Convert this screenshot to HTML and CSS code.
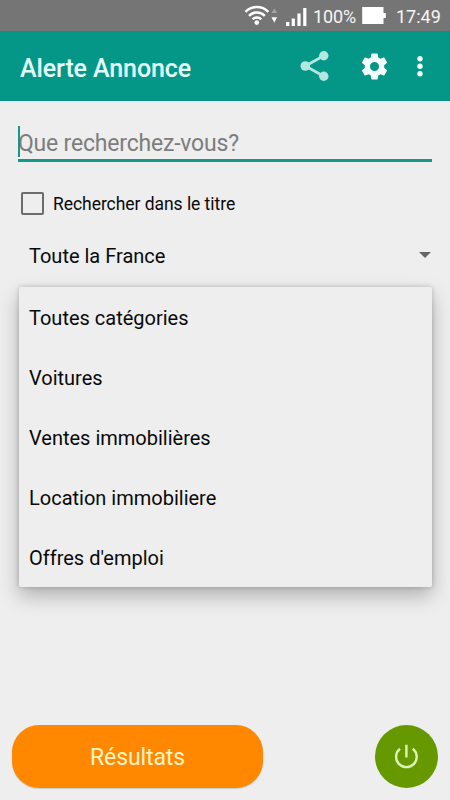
FILE: index.html
```html
<!DOCTYPE html>
<html lang="fr">
<head>
<meta charset="utf-8">
<title>Alerte Annonce</title>
<link rel="stylesheet" href="styles.css">
</head>
<body>
<div class="status">
  <svg class="signals" width="66" height="31" viewBox="244 0 66 31" fill="none" stroke="#fff">
    <path d="M245.500 11.800a16 16 0 0 1 22.800 0M249 15.800a11 11 0 0 1 15.800 0M252.600 19.300a6 6 0 0 1 8.600 0" stroke-width="2.400"/>
    <circle cx="256.800" cy="22.600" r="2.300" fill="#fff" stroke="none"/>
    <path d="M271.500 13l2.800-4.500 2.800 4.500z" fill="#a5a5a5" stroke="none"/>
    <path d="M271.500 17.200l2.800 5.600 2.800-5.600z" fill="#fff" stroke="none"/>
    <path d="M287.700 22v4M293.300 18.500V26M299 13.500V26M304.800 8V26" stroke-width="3.200"/>
  </svg>
  <span class="percent">100%</span>
  <svg class="battery" width="25" height="31" viewBox="362 0 25 31" fill="#fff"><path d="M362.200 7h21.300v6h2.300v5h-2.300v6h-21.300z"/></svg>
  <span class="clock">17:49</span>
</div>
<header class="appbar">
  <h1>Alerte Annonce</h1>
  <svg class="share" width="30" height="32" viewBox="0 0 30 32" fill="#b4e7df" stroke="#b4e7df">
    <path d="M23.800 5.800L5.300 16l18.500 10.200" fill="none" stroke-width="2.700"/>
    <circle cx="23.800" cy="5.800" r="4.700" stroke="none"/><circle cx="5.300" cy="16" r="4.800" stroke="none"/><circle cx="23.800" cy="26.200" r="4.700" stroke="none"/>
  </svg>
  <svg class="gear" width="31" height="31" viewBox="0 0 24 24" fill="#f7fffe"><path d="M19.430 12.980c.04-.32.07-.64.07-.98s-.03-.66-.07-.98l2.110-1.650c.19-.15.24-.42.12-.64l-2-3.460c-.12-.22-.39-.3-.61-.22l-2.490 1c-.52-.4-1.080-.73-1.690-.98l-.38-2.650C14.460 2.180 14.250 2 14 2h-4c-.25 0-.46.18-.49.42l-.38 2.650c-.61.25-1.170.59-1.690.98l-2.490-1c-.23-.09-.49 0-.61.22l-2 3.460c-.13.22-.07.49.12.64l2.110 1.650c-.04.32-.07.65-.07.98s.03.66.07.98l-2.110 1.650c-.19.15-.24.42-.12.64l2 3.460c.12.22.39.3.61.22l2.490-1c.52.4 1.080.73 1.690.98l.38 2.650c.03.24.24.42.49.42h4c.25 0 .46-.18.49-.42l.38-2.650c.61-.25 1.170-.59 1.690-.98l2.490 1c.23.09.49 0 .61-.22l2-3.460c.12-.22.07-.49-.12-.64l-2.110-1.650zM12 15.500c-1.930 0-3.500-1.570-3.500-3.500s1.570-3.500 3.500-3.500 3.500 1.570 3.500 3.500-1.570 3.500-3.500 3.500z"/></svg>
  <svg class="more" width="8" height="24" viewBox="0 0 8 24" fill="#f0fffd"><circle cx="4" cy="4.700" r="2.700"/><circle cx="4" cy="12.200" r="2.700"/><circle cx="4" cy="19.700" r="2.700"/></svg>
</header>
<main class="form">
  <div class="search"><span class="caret"></span><span class="hint">Que recherchez-vous?</span></div>
  <div class="check"><span class="box"></span><span class="check-label">Rechercher dans le titre</span></div>
  <div class="region"><span class="region-label">Toute la France</span><span class="arrow"></span></div>
  <ul class="menu">
    <li>Toutes catégories</li>
    <li>Voitures</li>
    <li>Ventes immobilières</li>
    <li>Location immobiliere</li>
    <li>Offres d'emploi</li>
  </ul>
</main>
<footer class="actions">
  <div class="results"><span>Résultats</span></div>
  <div class="power">
    <svg width="63" height="63" viewBox="0 0 63 63" fill="none" stroke="#dcf5b4" stroke-width="2.400"><path d="M25 23.800a10.300 10.300 0 1 0 12.800 0M31.400 19.800v12.600"/></svg>
  </div>
</footer>
</body>
</html>
```

FILE: styles.css
```css
* { box-sizing: border-box; }
body {
  margin: 0;
  width: 450px;
  height: 800px;
  overflow: hidden;
  display: flex;
  flex-direction: column;
  background: #eee;
  color: #090909;
  font-family: Roboto, "Liberation Sans", sans-serif;
  font-size: 20px;
  white-space: nowrap;
}
svg { display: block; flex: none; }
.status {
  height: 31px;
  background: #757575;
  color: #f5f5f5;
  display: flex;
  align-items: center;
  padding-left: 244px;
  font-size: 18px;
  line-height: 31px;
}
.percent { width: 48px; margin-left: 3px; padding-top: 2px; letter-spacing: -.1px; }
.battery { margin-left: 1px; }
.clock { margin-left: 9px; padding-top: 2px; }
.appbar {
  height: 70px;
  background: #049788;
  color: #e4fffb;
  display: flex;
  align-items: center;
  padding-left: 20px;
}
.appbar h1 {
  margin: 0;
  padding-top: 4px;
  width: 280px;
  font-size: 25px;
  font-weight: 500;
  letter-spacing: -.1px;
}
.gear { margin-left: 29px; }
.more { margin-left: 26px; }
.form { padding: 25px 18px 0; }
.search {
  height: 36px;
  border-bottom: 3px solid #17978a;
  display: flex;
  align-items: flex-start;
}
.caret { width: 2px; height: 31px; background: #17978a; }
.hint {
  margin-left: -2px;
  padding-top: 1px;
  font-size: 23px;
  line-height: 33px;
  letter-spacing: -.2px;
  color: #7d7d7d;
}
.check {
  height: 24px;
  margin-top: 29px;
  padding-left: 3px;
  display: flex;
  align-items: center;
}
.box { width: 23px; height: 23px; border: 2px solid #6c6c6c; border-radius: 2px; }
.check-label { margin-left: 9px; padding-top: 1px; font-size: 17.500px; letter-spacing: -.05px; }
.region {
  height: 40px;
  margin-top: 21px;
  padding: 0 1px 0 11px;
  display: flex;
  align-items: center;
  justify-content: space-between;
}
.arrow {
  margin-bottom: 2px;
  border: 6.500px solid transparent;
  border-top-color: #666;
  border-bottom: 0;
}
.menu {
  list-style: none;
  width: 413px;
  height: 300px;
  margin: 11px 0 0 1px;
  padding: 0;
  border-radius: 2px;
  background: #eee;
  box-shadow: 0 9px 20px rgba(0, 0, 0, .26), 0 0 5px rgba(0, 0, 0, .2);
}
.menu li { height: 60px; padding: 1px 0 0 10px; display: flex; align-items: center; }
.actions {
  margin-top: auto;
  padding: 0 12px 12px;
  display: flex;
  justify-content: space-between;
}
.results {
  width: 251px;
  height: 63px;
  border-radius: 27px;
  background: #f80;
  color: #fff3c8;
  font-size: 23px;
  letter-spacing: -.1px;
  display: flex;
  align-items: center;
  justify-content: center;
  padding-top: 2px;
  box-shadow: 0 1px 1px rgba(0, 0, 0, .15);
}
.power { width: 63px; height: 63px; border-radius: 50%; background: #690; }
```
